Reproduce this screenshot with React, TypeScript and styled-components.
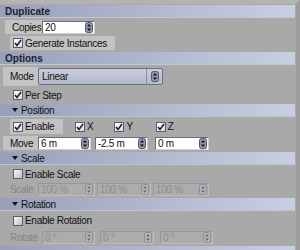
import React from 'react'
import styled, { createGlobalStyle } from 'styled-components'

const GlobalStyle = createGlobalStyle`
	html, body {
		margin: 0;
		padding: 0;
		background: #a9a9a9;
	}
	body {
		font-family: 'Liberation Sans', Arial, sans-serif;
		font-size: 10px;
		letter-spacing: -0.3px;
		color: #111;
	}
`

const Panel = styled.div`
	width: 296px;
	height: 250px;
	overflow: hidden;
	background: #a9a9a9;
	border-top: 4px solid #b3b3b3;
	border-right: 4px solid #9c9c9c;
	padding-top: 1px;
	display: flex;
	flex-direction: column;
	gap: 2px;
`

const Header = styled.div<{ $sub?: boolean }>`
	flex: 0 0 13px;
	margin-right: 1px;
	display: flex;
	align-items: center;
	gap: 2px;
	padding-left: ${({ $sub }) => ($sub ? '12px' : '5px')};
	background: linear-gradient(90deg, #98a0b9 0%, #aeb5cb 45%, #c9cfe2 100%);
	border-bottom: 1px solid #c2c6d2;
	box-sizing: border-box;
	font-weight: ${({ $sub }) => ($sub ? 'normal' : 'bold')};
	color: ${({ $sub }) => ($sub ? '#111' : '#1b1f30')};
	letter-spacing: ${({ $sub }) => ($sub ? '-0.3px' : '0')};
`

const Row = styled.div<{ $h: number }>`
	flex: 0 0 ${({ $h }) => $h}px;
	display: flex;
	align-items: center;
`

const Label = styled.div<{ $w: number; $left: number; $dim?: boolean; $plain?: boolean }>`
	width: ${({ $w }) => $w}px;
	margin-left: ${({ $left }) => $left}px;
	height: 100%;
	box-sizing: border-box;
	padding-left: 7px;
	display: flex;
	align-items: center;
	background: ${({ $plain }) => ($plain ? 'transparent' : '#c3c3c3')};
	color: ${({ $dim }) => ($dim ? '#858585' : '#111')};
`

const CheckWrap = styled.label<{ $w?: number; $hl?: boolean; $left: number }>`
	display: flex;
	align-items: center;
	gap: 2px;
	height: 100%;
	margin-left: ${({ $left }) => $left}px;
	padding-left: 3px;
	width: ${({ $w }) => ($w ? `${$w}px` : 'auto')};
	box-sizing: border-box;
	background: ${({ $hl }) => ($hl ? '#c3c3c3' : 'transparent')};
`

const Box = styled.span<{ $on?: boolean }>`
	width: 10px;
	height: 10px;
	box-sizing: border-box;
	border: 1px solid #5c5f68;
	background: ${({ $on }) =>
		$on
			? 'linear-gradient(135deg, #ffffff 0%, #d4d8e6 100%)'
			: 'linear-gradient(135deg, #fbfbfd 0%, #b9bdcc 100%)'};
	display: flex;
	align-items: center;
	justify-content: center;
	flex-shrink: 0;
`

const Field = styled.div<{ $w: number; $gap?: number; $off?: boolean }>`
	width: ${({ $w }) => $w}px;
	height: 13px;
	margin-left: ${({ $gap }) => $gap ?? 0}px;
	box-sizing: border-box;
	display: flex;
	align-items: center;
	justify-content: space-between;
	border: 1px solid ${({ $off }) => ($off ? '#979797' : '#6f6f6f')};
	border-bottom-color: ${({ $off }) => ($off ? '#bdbdbd' : '#d0d0d0')};
	border-right-color: ${({ $off }) => ($off ? '#bdbdbd' : '#d0d0d0')};
	background: ${({ $off }) => ($off ? '#acacac' : '#fdfdfd')};
	color: ${({ $off }) => ($off ? '#8c8c8c' : '#111')};
	padding-left: 2px;
	padding-right: 1px;
`

const Dropdown = styled.div`
	width: 125px;
	height: 17px;
	box-sizing: border-box;
	display: flex;
	align-items: center;
	justify-content: space-between;
	padding-left: 3px;
	border: 1px solid #6d7283;
	border-radius: 2px;
	background: linear-gradient(180deg, #c9cedd 0%, #b3b9cc 100%);
`

const DropArrow = styled.div`
	width: 15px;
	height: 100%;
	display: flex;
	align-items: center;
	justify-content: center;
	border-left: 1px solid #8a8fa0;
`

const Tri = styled.span`
	width: 0;
	height: 0;
	border-left: 3px solid transparent;
	border-right: 3px solid transparent;
	border-top: 4px solid #111;
	margin-right: 1px;
`

const Check = () => (
	<svg width='8' height='8' viewBox='0 0 8 8'>
		<path d='M1 4 L3 6.5 L7 1' fill='none' stroke='#1a1f3a' strokeWidth='1.6' />
	</svg>
)

const Spin = ({ off }: { off?: boolean }) => (
	<svg width='8' height='11' viewBox='0 0 8 11'>
		<rect x='0.5' y='0.5' width='7' height='10' rx='2' fill={off ? '#b4b8c4' : '#8e96ae'} stroke={off ? '#8a8d96' : '#525869'} />
		<path d='M4 2 L6 4.5 L2 4.5 Z M4 9 L6 6.5 L2 6.5 Z' fill={off ? '#666' : '#111'} />
	</svg>
)

const CheckItem = ({ on, text, left, w, hl }: { on?: boolean; text: string; left: number; w?: number; hl?: boolean }) => (
	<CheckWrap $left={left} $w={w} $hl={hl}>
		<Box $on={on}>{on && <Check />}</Box>
		<span>{text}</span>
	</CheckWrap>
)

const Input = ({ value, w, gap, off }: { value: string; w: number; gap?: number; off?: boolean }) => (
	<Field $w={w} $gap={gap} $off={off}>
		<span>{value}</span>
		<Spin off={off} />
	</Field>
)

export default function App() {
	return (
		<>
			<GlobalStyle />
			<Panel>
				<Header>Duplicate</Header>
				<Row $h={14}>
					<Label $left={5} $w={37}>Copies</Label>
					<Input value='20' w={53} />
				</Row>
				<Row $h={14}>
					<CheckItem on text='Generate Instances' left={10} w={105} hl />
				</Row>
				<Header>Options</Header>
				<Row $h={19}>
					<Label $left={3} $w={35}>Mode</Label>
					<Dropdown>
						<span>Linear</span>
						<DropArrow>
							<Spin />
						</DropArrow>
					</Dropdown>
				</Row>
				<Row $h={14}>
					<CheckItem on text='Per Step' left={10} />
				</Row>
				<Header $sub>
					<Tri />
					Position
				</Header>
				<Row $h={15}>
					<CheckItem on text='Enable' left={10} w={53} hl />
					<CheckItem on text='X' left={9} />
					<CheckItem on text='Y' left={18} />
					<CheckItem on text='Z' left={20} />
				</Row>
				<Row $h={14}>
					<Label $left={3} $w={35}>Move</Label>
					<Input value='6 m' w={53} />
					<Input value='-2.5 m' w={53} gap={4} />
					<Input value='0 m' w={54} gap={7} />
				</Row>
				<Header $sub>
					<Tri />
					Scale
				</Header>
				<Row $h={14}>
					<CheckItem text='Enable Scale' left={10} />
				</Row>
				<Row $h={13}>
					<Label $left={3} $w={35} $dim $plain>Scale</Label>
					<Input value='100 %' w={57} off />
					<Input value='100 %' w={54} gap={2} off />
					<Input value='100 %' w={56} gap={2} off />
				</Row>
				<Header $sub>
					<Tri />
					Rotation
				</Header>
				<Row $h={15}>
					<CheckItem text='Enable Rotation' left={10} />
				</Row>
				<Row $h={14}>
					<Label $left={3} $w={39} $dim $plain>Rotate</Label>
					<Input value='0 °' w={53} off />
					<Input value='0 °' w={54} gap={5} off />
					<Input value='0 °' w={53} gap={6} off />
				</Row>
				<Header $sub />
			</Panel>
		</>
	)
}
